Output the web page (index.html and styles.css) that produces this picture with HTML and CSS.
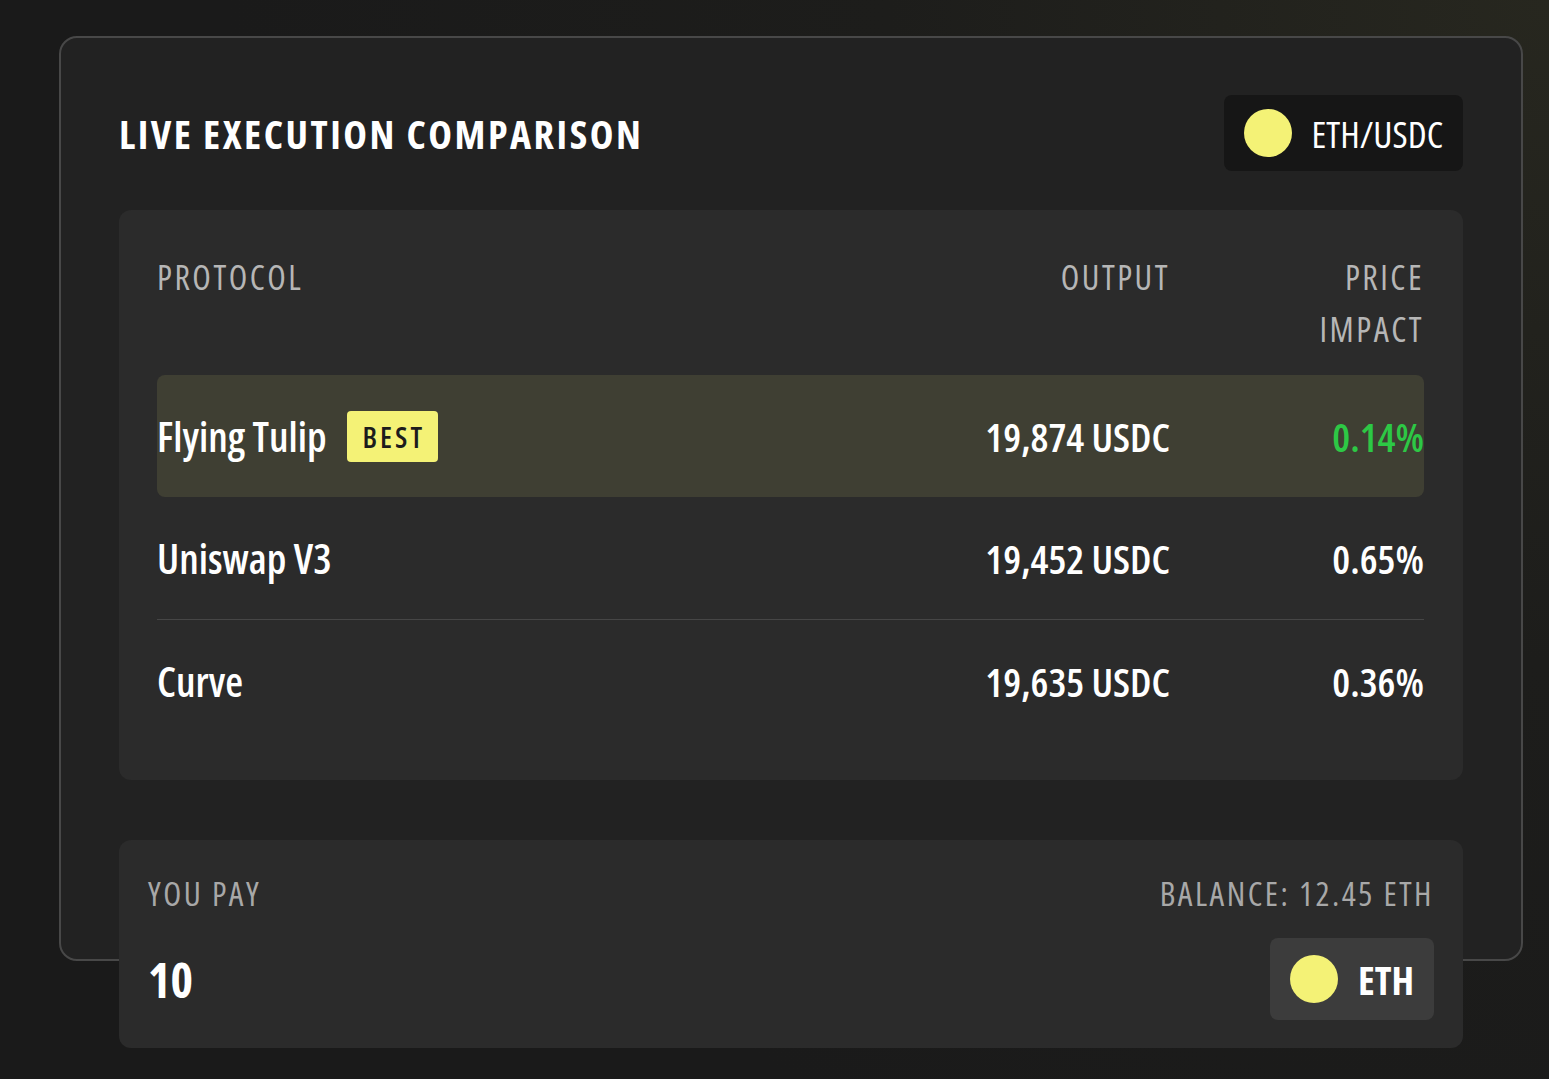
FILE: index.html
```html
<!DOCTYPE html>
<html lang="en">
<head>
   <meta charset="UTF-8">
   <meta name="viewport" content="width=device-width, initial-scale=1.0">
   <title>Live Execution Comparison</title>
   <link rel="stylesheet" href="styles.css">
</head>
<body>

   <div class="card">
      <div class="card-head">
         <h1>LIVE EXECUTION COMPARISON</h1>
         <div class="pair">
            <span class="dot"></span>
            <span>ETH/USDC</span>
         </div>
      </div>

      <div class="compare">
         <div class="row head">
            <div>PROTOCOL</div>
            <div class="num">OUTPUT</div>
            <div class="num">PRICE IMPACT</div>
         </div>
         <div class="row item best">
            <div class="name">Flying Tulip <span class="badge">BEST</span></div>
            <div class="num">19,874 USDC</div>
            <div class="num green">0.14%</div>
         </div>
         <div class="row item">
            <div class="name">Uniswap V3</div>
            <div class="num">19,452 USDC</div>
            <div class="num">0.65%</div>
         </div>
         <div class="row item divided">
            <div class="name">Curve</div>
            <div class="num">19,635 USDC</div>
            <div class="num">0.36%</div>
         </div>
      </div>

      <div class="pay">
         <div class="pay-top">
            <span>YOU PAY</span>
            <span>BALANCE: 12.45 ETH</span>
         </div>
         <div class="pay-main">
            <span class="amount">10</span>
            <div class="token">
               <span class="dot"></span>
               <span>ETH</span>
            </div>
         </div>
      </div>
   </div>

</body>
</html>
```

FILE: styles.css
```css
html, body {
   height: 100%;
}
body {
   margin: 0;
   overflow: hidden;
   font-family: "Open Sans", "Roboto", "DejaVu Sans Condensed", sans-serif;
   font-stretch: 75%;
   color: #fff;
   background: radial-gradient(circle at 100% 0%, #27271f 0%, #1d1d1b 35%, #1a1a1a 70%);
}
.card {
   box-sizing: border-box;
   width: 1464px;
   height: 925px;
   margin: 36px 0 0 59px;
   padding: 57px 58px 0 58px;
   background-color: #222222;
   border: 2px solid #484848;
   border-radius: 18px;
}
.card-head {
   display: flex;
   justify-content: space-between;
   align-items: center;
   height: 76px;
}
h1 {
   margin: 0;
   font-size: 40px;
   font-weight: 700;
   letter-spacing: 2.5px;
}
.pair {
   display: flex;
   align-items: center;
   gap: 20px;
   height: 76px;
   padding: 0 20px;
   background-color: #161616;
   border-radius: 8px;
   font-size: 37px;
}
.dot {
   width: 48px;
   height: 48px;
   border-radius: 50%;
   background-color: #f4f276;
}

/* comparison table */
.compare {
   box-sizing: border-box;
   height: 570px;
   margin-top: 39px;
   padding: 41px 39px 0 38px;
   background-color: #2b2b2b;
   border-radius: 12px;
}
.row {
   display: grid;
   grid-template-columns: 1fr 250px 150px;
   column-gap: 104px;
   align-items: center;
}
.head {
   margin-bottom: 20px;
   color: #b6b6b6;
   font-size: 34px;
   line-height: 52px;
   letter-spacing: 2.5px;
   align-items: start;
}
.num {
   text-align: right;
}
.item {
   height: 122px;
   font-size: 40px;
   font-weight: 600;
}
.best {
   background-color: #3f3f33;
   border-radius: 8px;
}
.divided {
   border-top: 1px solid #464646;
}
.name {
   display: flex;
   align-items: center;
   gap: 20px;
   font-size: 41px;
}
.badge {
   display: inline-flex;
   align-items: center;
   height: 51px;
   padding: 0 13px 0 16px;
   background-color: #f4f276;
   color: #1c1c1c;
   border-radius: 4px;
   font-size: 29px;
   font-weight: 600;
   letter-spacing: 3px;
}
.green {
   color: #2dc845;
}

/* pay box */
.pay {
   box-sizing: border-box;
   height: 208px;
   margin-top: 60px;
   padding: 36px 29px 0 29px;
   background-color: #2b2b2b;
   border-radius: 12px;
}
.pay-top {
   display: flex;
   justify-content: space-between;
   line-height: 36px;
   font-size: 33px;
   letter-spacing: 2.5px;
   color: #a8a8a8;
}
.pay-main {
   display: flex;
   justify-content: space-between;
   align-items: center;
   margin-top: 26px;
}
.amount {
   font-size: 48px;
   font-weight: 700;
}
.token {
   display: flex;
   align-items: center;
   gap: 20px;
   height: 82px;
   padding: 0 20px;
   background-color: #3c3c3c;
   border-radius: 8px;
   font-size: 39px;
   font-weight: 700;
}
```
